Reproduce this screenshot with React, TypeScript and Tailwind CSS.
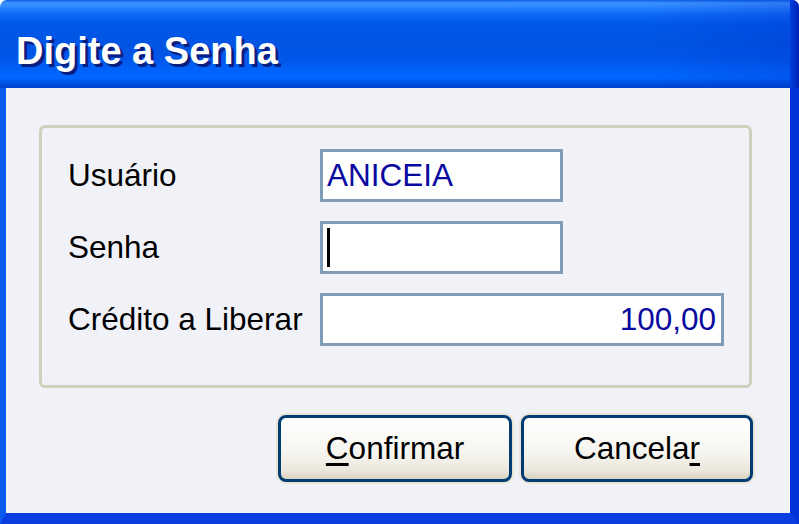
import React from "react";

const font = { fontFamily: '"Liberation Sans", Arial, sans-serif' };

function Row({ label, children }: { label: string; children: React.ReactNode }) {
  return (
    <div className="flex h-[53px] items-center">
      <div className="w-[252px] text-[31.5px] leading-[53px] text-black">{label}</div>
      {children}
    </div>
  );
}

export default function App() {
  return (
    <div className="h-[524px] w-[799px] overflow-hidden bg-white" style={font}>
      <div className="flex h-[524px] w-[799px] flex-col overflow-hidden rounded-t-[7px]">
        {/* Title bar */}
        <div className="relative h-[88px] bg-[linear-gradient(to_bottom,#0a5de8_0px,#3d92ff_3px,#2b86ff_7px,#0d6af6_14px,#0058e8_24px,#0054e3_45px,#0058ea_60px,#0064fb_72px,#0066ff_78px,#0052e0_83px,#0042cc_88px)]">
          <div className="absolute inset-y-0 right-0 w-[150px] bg-[linear-gradient(to_right,rgba(0,40,200,0),rgba(0,40,200,0.25))]" />
          <div className="absolute inset-y-0 right-0 w-[9px] bg-[linear-gradient(to_right,#0040e0,#0020b0)]" />
          <div className="relative pl-[16px] pt-[32px] text-[38px] font-bold leading-[38px] text-white [text-shadow:3px_3px_0_#0a1e80]">
            Digite a Senha
          </div>
        </div>
        {/* Body with frame */}
        <div className="flex flex-1 border-b-[11px] border-l-[6px] border-r-[9px] border-b-[#0a3ee0] border-l-[#0a5cf0] border-r-[#0034d8] bg-[#f1f2f8]">
          <div className="flex flex-1 flex-col px-[33px] pt-[37px]">
            <div className="flex h-[263px] w-[713px] flex-col gap-[19px] rounded-[6px] border-[3px] border-[#d0d0bf] pl-[26px] pt-[21px]">
              <Row label="Usuário">
                <div className="flex h-[53px] w-[243px] items-center border-[3px] border-[#7f9db9] bg-white pl-[4px] text-[31.5px] text-[#0a0aa0]">
                  ANICEIA
                </div>
              </Row>
              <Row label="Senha">
                <div className="flex h-[53px] w-[243px] items-center border-[3px] border-[#7f9db9] bg-white pl-[4px]">
                  <div className="h-[39px] w-[3px] bg-black" />
                </div>
              </Row>
              <Row label="Crédito a Liberar">
                <div className="flex h-[53px] w-[404px] items-center justify-end border-[3px] border-[#7f9db9] bg-white pr-[5px] text-[31.5px] text-[#0a0aa0]">
                  100,00
                </div>
              </Row>
            </div>
            <div className="flex justify-end gap-[9px] pr-[4px] pt-[27px]">
              <button className="flex h-[67px] w-[234px] items-center justify-center rounded-[8px] border-[3px] border-[#003c74] bg-[linear-gradient(to_bottom,#ffffff,#f6f5f0_55%,#ebe8dd_85%,#d8d2c2)] text-[31.5px] text-black shadow-[0_0_0_2px_#e8e5d6]">
                <span>
                  <span className="underline decoration-[3px] underline-offset-[4px]">C</span>onfirmar
                </span>
              </button>
              <button className="flex h-[67px] w-[232px] items-center justify-center rounded-[8px] border-[3px] border-[#003c74] bg-[linear-gradient(to_bottom,#ffffff,#f6f5f0_55%,#ebe8dd_85%,#d8d2c2)] text-[31.5px] text-black shadow-[0_0_0_2px_#e8e5d6]">
                <span>
                  Cancela<span className="underline decoration-[3px] underline-offset-[4px]">r</span>
                </span>
              </button>
            </div>
          </div>
        </div>
      </div>
    </div>
  );
}
